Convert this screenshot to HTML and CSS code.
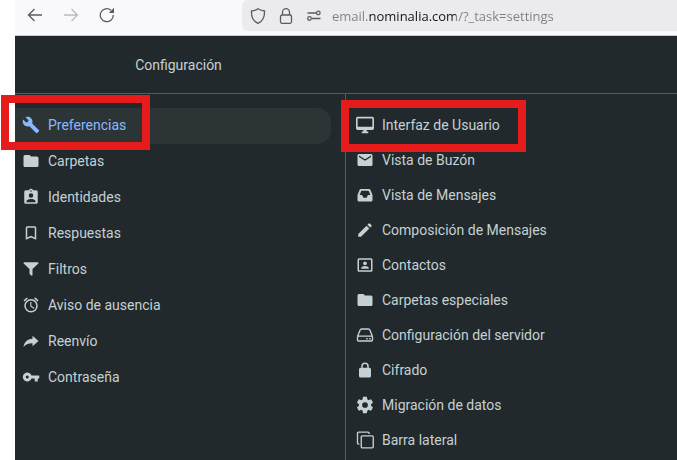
FILE: index.html
```html
<!DOCTYPE html>
<html lang="es">
<head>
    <meta charset="UTF-8">
    <meta name="viewport" content="width=device-width, initial-scale=1.0">
    <title>Configuración</title>
    <link rel="stylesheet" href="styles.css">
</head>
<body>
    <!-- Browser toolbar -->
    <div class="toolbar">
        <button type="button" class="tool" aria-label="Atrás">
            <svg viewBox="0 0 16 16"><path d="M15 8H1.5M7.5 2l-6 6 6 6"/></svg>
        </button>
        <button type="button" class="tool" aria-label="Adelante" disabled>
            <svg viewBox="0 0 16 16"><path d="M1 8h13.5M8.5 2l6 6-6 6"/></svg>
        </button>
        <button type="button" class="tool" aria-label="Recargar">
            <svg viewBox="0 0 16 16"><path d="M14.3 8A6.5 6.5 0 1 1 12 3.2"/><path class="solid" d="M15 .8v5.2H9.8z"/></svg>
        </button>
        <div class="urlbar">
            <svg viewBox="0 0 16 16"><path d="M8 .8c2 1.3 4.3 2 6.5 2.2.3 5.5-1.6 10-6.5 12.3C3.1 13 1.2 8.5 1.5 3 3.7 2.8 6 2.1 8 .8z"/></svg>
            <svg viewBox="0 0 16 16"><rect x="2.5" y="7" width="11" height="8.3" rx="1.5"/><path d="M4.500 7V4.200a3.500 3.500 0 0 1 7 0V7"/></svg>
            <svg viewBox="0 0 16 16"><path d="M1.500 5H10M6 10.500h8.500"/><circle cx="12.300" cy="5" r="1.800"/><circle cx="3.500" cy="10.500" r="1.800"/></svg>
            <input type="text" class="url" aria-label="Dirección" value="email.nominalia.com/?_task=settings">
        </div>
    </div>

    <!-- Webmail settings -->
    <header class="header">
        <h1>Configuración</h1>
    </header>
    <div class="panels">
        <nav class="menu" aria-label="Configuración">
            <ul>
                <li><a class="active marked" href="#preferencias">
                    <svg viewBox="0 0 24 24"><path d="M22.7 19l-9.100-9.100c.9-2.300.4-5-1.500-6.900-2-2-5-2.400-7.400-1.300L9 6 6 9 1.600 4.700C.4 7.100.9 10.100 2.900 12.100c1.900 1.900 4.600 2.400 6.900 1.500l9.100 9.100c.4.4 1 .4 1.400 0l2.300-2.300c.5-.4.5-1.100.1-1.400z"/></svg>
                    Preferencias</a></li>
                <li><a href="#carpetas">
                    <svg viewBox="0 0 24 24"><path d="M10 4H4a2 2 0 0 0-2 2v12a2 2 0 0 0 2 2h16a2 2 0 0 0 2-2V8a2 2 0 0 0-2-2h-8z"/></svg>
                    Carpetas</a></li>
                <li><a href="#identidades">
                    <svg viewBox="0 0 24 24"><path fill-rule="evenodd" d="M19 3h-4.200a3 3 0 0 0-5.600 0H5a2 2 0 0 0-2 2v14a2 2 0 0 0 2 2h14a2 2 0 0 0 2-2V5a2 2 0 0 0-2-2zm-7 0a1 1 0 1 1 0 2 1 1 0 0 1 0-2zm0 4a3 3 0 1 1 0 6 3 3 0 0 1 0-6zm6 12H6v-1.400c0-2 4-3.100 6-3.100s6 1.100 6 3.100z"/></svg>
                    Identidades</a></li>
                <li><a href="#respuestas">
                    <svg viewBox="0 0 24 24"><path fill-rule="evenodd" d="M17 3H7a2 2 0 0 0-2 2v16l7-3 7 3V5a2 2 0 0 0-2-2zm0 15l-5-2.200L7 18V5h10z"/></svg>
                    Respuestas</a></li>
                <li><a href="#filtros">
                    <svg viewBox="0 0 24 24"><path d="M14 12v7.900c0 .3-.1.600-.3.800a1 1 0 0 1-1.400 0l-2-2a1 1 0 0 1-.3-.8V12L2.200 4.600A1 1 0 0 1 3 3h18a1 1 0 0 1 .8 1.600L14 12z"/></svg>
                    Filtros</a></li>
                <li><a href="#ausencia">
                    <svg viewBox="0 0 24 24"><path fill-rule="evenodd" d="M22 5.700l-4.600-3.900-1.300 1.500 4.600 3.900zM7.900 3.400L6.600 1.900 2 5.700l1.300 1.500zM12.500 8H11v6l4.700 2.900.8-1.300-4-2.300zM12 4a9 9 0 1 0 0 18 9 9 0 0 0 0-18zm0 16a7 7 0 1 1 0-14 7 7 0 0 1 0 14z"/></svg>
                    Aviso de ausencia</a></li>
                <li><a href="#reenvio">
                    <svg viewBox="0 0 24 24"><path d="M14 5l8 7-8 7v-4.100c-5 0-9 1.100-12 5.100 1-6 4.500-10.500 12-11z"/></svg>
                    Reenvío</a></li>
                <li><a href="#contrasena">
                    <svg viewBox="0 0 24 24"><path fill-rule="evenodd" d="M12.700 10a6 6 0 1 0 0 4H17v4h4v-4h2v-4zM7 14a2 2 0 1 1 0-4 2 2 0 0 1 0 4z"/></svg>
                    Contraseña</a></li>
            </ul>
        </nav>
        <nav class="sections" aria-label="Preferencias">
            <ul>
                <li><a class="marked" href="#interfaz">
                    <svg viewBox="1 1 22 22"><path fill-rule="evenodd" d="M21 2H3a2 2 0 0 0-2 2v12a2 2 0 0 0 2 2h7v2H8v2h8v-2h-2v-2h7a2 2 0 0 0 2-2V4a2 2 0 0 0-2-2zm0 12H3V4h18z"/></svg>
                    Interfaz de Usuario</a></li>
                <li><a href="#buzon">
                    <svg viewBox="0 0 24 24"><path fill-rule="evenodd" d="M20 4H4a2 2 0 0 0-2 2v12a2 2 0 0 0 2 2h16a2 2 0 0 0 2-2V6a2 2 0 0 0-2-2zm0 4l-8 5-8-5V6l8 5 8-5z"/></svg>
                    Vista de Buzón</a></li>
                <li><a href="#mensajes">
                    <svg viewBox="0 0 24 24"><path fill-rule="evenodd" d="M17.500 4h-11a2 2 0 0 0-1.800 1.200L2 12v6.500a2 2 0 0 0 2 2h16a2 2 0 0 0 2-2V12l-2.700-6.800A2 2 0 0 0 17.500 4zm-.7 2.200L19.200 12H16l-2 3.500h-4L8 12H4.800l2.400-5.800z"/></svg>
                    Vista de Mensajes</a></li>
                <li><a href="#composicion">
                    <svg viewBox="0 0 24 24"><path d="M20.700 7c.4-.4.4-1 0-1.400l-2.300-2.300a1 1 0 0 0-1.400 0l-1.800 1.800 3.700 3.700M3 17.200V21h3.700L17.800 9.900l-3.700-3.700z"/></svg>
                    Composición de Mensajes</a></li>
                <li><a href="#contactos">
                    <svg viewBox="0 0 24 24"><path fill-rule="evenodd" d="M20 3H4a2 2 0 0 0-2 2v14a2 2 0 0 0 2 2h16a2 2 0 0 0 2-2V5a2 2 0 0 0-2-2zm0 16H4V5h16z"/><circle cx="12" cy="9.800" r="2.500"/><path d="M17 17H7v-1c0-1.700 3.300-2.600 5-2.600s5 .9 5 2.600z"/></svg>
                    Contactos</a></li>
                <li><a href="#especiales">
                    <svg viewBox="0 0 24 24"><path d="M10 4H4a2 2 0 0 0-2 2v12a2 2 0 0 0 2 2h16a2 2 0 0 0 2-2V8a2 2 0 0 0-2-2h-8z"/></svg>
                    Carpetas especiales</a></li>
                <li><a href="#servidor">
                    <svg class="outline" viewBox="0 0 24 24"><path d="M2 14l3.500-8.500Q6 4 7.500 4h9Q18 4 18.500 5.500L22 14M3.500 13.500h17q1.500 0 1.500 1.500v3.500q0 1.500-1.500 1.500h-17Q2 20 2 18.500V15q0-1.500 1.500-1.500zM13.500 17h2M17.500 17h2"/></svg>
                    Configuración del servidor</a></li>
                <li><a href="#cifrado">
                    <svg viewBox="0 0 24 24"><path fill-rule="evenodd" d="M18 9h-1V7A5 5 0 0 0 7 7v2H6a2 2 0 0 0-2 2v9a2 2 0 0 0 2 2h12a2 2 0 0 0 2-2v-9a2 2 0 0 0-2-2zm-3 0H9V7a3 3 0 0 1 6 0z"/></svg>
                    Cifrado</a></li>
                <li><a href="#migracion">
                    <svg viewBox="1 1 22 22"><path fill-rule="evenodd" d="M12 15.500a3.500 3.500 0 1 1 0-7 3.500 3.500 0 0 1 0 7m7.400-2.500c.1-.3.1-.6.1-1s0-.7-.1-1l2.100-1.600c.2-.2.3-.4.1-.7l-2-3.400c-.1-.2-.4-.3-.6-.2l-2.500 1c-.5-.4-1.100-.7-1.700-1l-.4-2.600c0-.3-.2-.5-.5-.5h-4c-.2 0-.4.2-.5.5l-.3 2.600c-.7.3-1.200.6-1.700 1l-2.500-1c-.3-.1-.5 0-.6.2l-2 3.400c-.2.300-.1.500.1.700L4.600 11c-.1.300-.1.600-.1 1s0 .7.100 1l-2.200 1.600c-.2.200-.3.400-.1.700l2 3.400c.1.200.3.300.6.200l2.500-1c.5.400 1 .7 1.700 1l.3 2.600c.1.300.3.500.5.500h4c.3 0 .5-.2.500-.5l.4-2.600c.6-.3 1.200-.6 1.700-1l2.500 1c.2.100.5 0 .6-.2l2-3.400c.2-.3.100-.5-.1-.7z"/></svg>
                    Migración de datos</a></li>
                <li><a href="#barra">
                    <svg class="outline" viewBox="0 0 24 24"><path d="M4.500 17.500h-1q-1.500 0-1.500-1.500V3q0-1.500 1.500-1.500H16q1.500 0 1.500 1.500v1"/><rect x="7" y="6.500" width="16" height="16" rx="1.500"/></svg>
                    Barra lateral</a></li>
            </ul>
        </nav>
    </div>
</body>
</html>
```
FILE: styles.css
```css
* {
    box-sizing: border-box;
}
body {
    margin: 0;
    padding-left: 15px;
    min-height: 100vh;
    display: flex;
    flex-direction: column;
    background-color: #fff;
    color: #c5d1d3;
    font-family: Roboto, "Liberation Sans", sans-serif;
    font-size: 14px;
    line-height: 20px;
}

/* Browser toolbar */
.toolbar {
    display: flex;
    align-items: flex-start;
    height: 36px;
    padding-left: 2px;
    background-color: #f9f9fb;
    border-bottom: 1px solid #ccc;
}
.toolbar svg {
    width: 16px;
    height: 16px;
    flex: none;
    fill: none;
    stroke: #5b5b66;
    stroke-width: 1.3;
}
.toolbar .solid {
    fill: #5b5b66;
    stroke: none;
}
.tool {
    display: flex;
    align-items: center;
    justify-content: center;
    width: 36px;
    height: 30px;
    padding: 0;
    border: none;
    background: none;
}
.tool:disabled {
    opacity: 0.4;
}
.urlbar {
    flex: 1;
    display: flex;
    align-items: center;
    gap: 12px;
    height: 31px;
    margin-left: 117px;
    padding-left: 8px;
    background-color: #ebebed;
    border-radius: 6px 0 0 6px;
}
.url {
    flex: 1;
    min-width: 0;
    margin-left: -2px;
    padding: 0;
    border: none;
    outline: none;
    font-family: "Open Sans", "Noto Sans", sans-serif;
    font-size: 13px;
    line-height: 20px;
    color: transparent;
    /* the domain is darker than the rest of the address */
    background: linear-gradient(to right, #7e7e84 36px, #15141a 36px, #15141a 124px, #7e7e84 124px);
    -webkit-background-clip: text;
    background-clip: text;
}

/* Settings header */
.header {
    height: 58px;
    display: flex;
    align-items: center;
    background-color: #21292c;
    border-bottom: 1px solid #4d6066;
}
.header h1 {
    width: 50%;
    margin: 0;
    padding-right: 4px;
    font-size: 14px;
    font-weight: normal;
    text-align: center;
}

/* Columns */
.panels {
    flex: 1;
    display: flex;
    background-color: #21292c;
}
.menu,
.sections {
    width: 50%;
    padding-top: 14px;
}
.menu {
    padding-right: 14px;
    border-right: 1px solid #4d6066;
}
ul {
    list-style: none;
    margin: 0;
    padding: 0;
}
li a {
    position: relative;
    display: flex;
    align-items: center;
    gap: 8px;
    padding-bottom: 2px;
    color: #c5d1d3;
    text-decoration: none;
}
li svg {
    width: 18px;
    height: 18px;
    fill: currentColor;
}
li .outline {
    fill: none;
    stroke: currentColor;
    stroke-width: 1.8;
}
.menu a {
    height: 36px;
    padding-left: 7px;
}
.sections a {
    height: 35px;
    padding-left: 10px;
}
.menu .active {
    color: #8ab8ff;
    background-color: #2d3436;
    border-radius: 0 14px 14px 0;
}

/* Red frames around the options to pick */
.marked::after {
    content: "";
    position: absolute;
    z-index: 1;
    box-sizing: border-box;
    border: 8px solid #e61b1b;
}
.menu .marked::after {
    left: -14px;
    top: -13px;
    width: 149px;
    height: 55px;
}
.sections .marked::after {
    left: -5px;
    top: -8px;
    width: 185px;
    height: 52px;
}
```
